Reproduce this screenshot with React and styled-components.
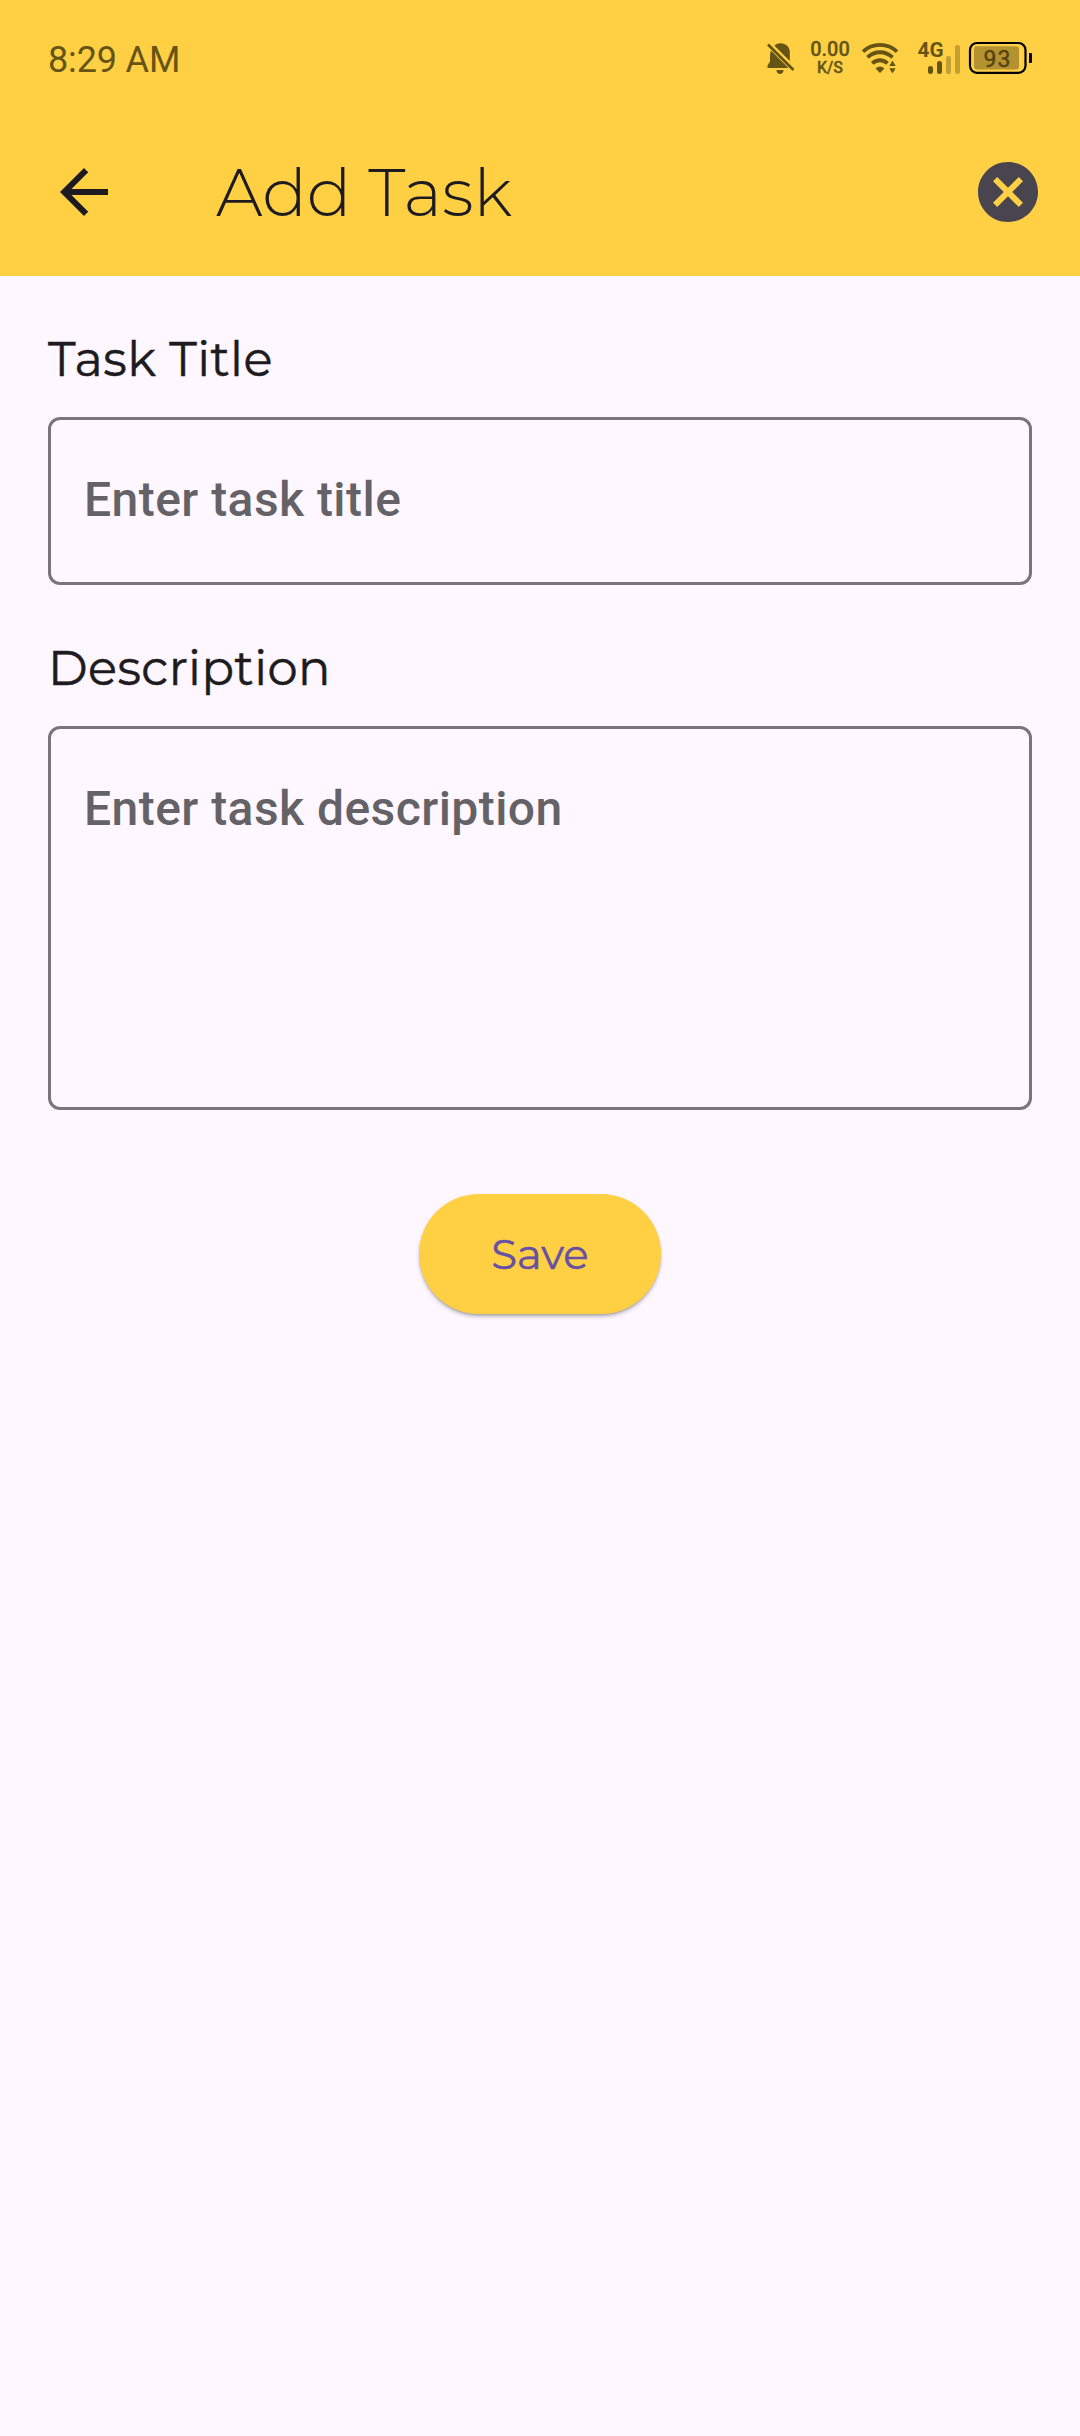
import React from "react";
import styled, { createGlobalStyle } from "styled-components";

const GlobalStyle = createGlobalStyle`
  *, *::before, *::after { box-sizing: border-box; }
  body { margin: 0; background: #fef7ff; }
`;

const display = `"Montserrat", "Inter", sans-serif`;
const body = `"Roboto", sans-serif`;

const Screen = styled.div`
  display: flex;
  flex-direction: column;
  width: 1080px;
  height: 2436px;
  background: #fef7ff;
  color: #1d1b20;
  font-family: ${body};
  overflow: hidden;
`;

const Header = styled.header`
  height: 276px;
  background: #ffd044;
`;

const StatusBar = styled.div`
  display: flex;
  align-items: center;
  justify-content: space-between;
  height: 108px;
  padding: 10px 48px 0;
  color: #665414;
`;

const Clock = styled.span`
  padding-top: 2px;
  font-size: 36px;
  line-height: 42px;
  letter-spacing: -0.15px;
`;

const StatusIcons = styled.div`
  display: flex;
  align-items: center;
  height: 42px;
`;

const NetSpeed = styled.div`
  display: flex;
  flex-direction: column;
  align-items: center;
  width: 40px;
  margin: 0 11px 0 15px;
  padding-bottom: 2px;
  font-weight: 500;
  -webkit-text-stroke: 0.3px currentColor;
`;

const SpeedValue = styled.span`
  font-size: 20px;
  line-height: 19px;
`;

const SpeedUnit = styled.span`
  font-size: 16px;
  line-height: 18px;
`;

const Toolbar = styled.div`
  display: flex;
  align-items: center;
  height: 168px;
  padding: 0 36px 0 48px;
`;

const IconButton = styled.button`
  display: flex;
  padding: 0;
  border: 0;
  background: none;
  color: ${(p) => p.$color};
`;

const Title = styled.h1`
  flex: 1;
  margin: 0 0 0 96px;
  padding-top: 2px;
  font: 300 66px/80px ${display};
`;

const Label = styled.label`
  height: 72px;
  margin-bottom: 21px;
  font: 400 48px/70px ${display};
  letter-spacing: 0.42px;
  -webkit-text-stroke: 0.5px currentColor;
`;

const Form = styled.main`
  display: flex;
  flex-direction: column;
  padding: 48px 48px 0;
`;

const field = `
  display: block;
  width: 100%;
  border: 3px solid #79747e;
  border-radius: 12px;
  background: transparent;
  font: 500 48px/72px ${body};
  letter-spacing: 0.45px;
  outline: none;
  resize: none;
  &::placeholder { color: #656267; opacity: 1; }
`;

const Input = styled.input`
  ${field}
  height: 168px;
  margin-bottom: 48px;
  padding: 0 33px 3px;
`;

const TextArea = styled.textarea`
  ${field}
  height: 384px;
  padding: 44px 33px;
`;

const SaveButton = styled.button`
  align-self: center;
  width: 242px;
  height: 120px;
  margin-top: 84px;
  padding: 0;
  border: 0;
  border-radius: 60px;
  background: #ffd044;
  box-shadow: 0 3px 4px -1px rgba(0, 0, 0, 0.34), 0 1px 2px rgba(0, 0, 0, 0.08);
  color: #6750a4;
  font: 400 42px/60px ${display};
  letter-spacing: -0.1px;
  -webkit-text-stroke: 0.5px currentColor;
`;

const StatusGlyphs = styled.svg`
  display: block;
  flex: none;
`;

function BellOff() {
  return (
    <StatusGlyphs width="29" height="42" viewBox="766 38 29 42" fill="currentColor">
      <path d="M774.500 45.700C776 44 778 43.300 780.500 43.300C786 43.300 789.800 47 789.800 52.500V61Z" />
      <path d="M771 50.500C769.800 53 770 57 770 61.500L767.500 65.500V68H788.500Z" />
      <path d="M768 44.500L793.500 70" stroke="currentColor" strokeWidth="2.700" />
      <path d="M776.500 70H783.500C783.500 72.500 782 74 780 74S776.500 72.500 776.500 70Z" />
    </StatusGlyphs>
  );
}

function Wifi() {
  return (
    <StatusGlyphs width="38" height="42" viewBox="861 38 38 42" fill="none" stroke="currentColor" strokeWidth="3.800">
      <path d="M863 51.600A25 25 0 0 1 897 51.600" />
      <path d="M867.500 57.300A18 18 0 0 1 892.500 57.300" />
      <path d="M872.300 63.300A11 11 0 0 1 887.500 63.300" />
      <path d="M875.500 68.500Q880 64.500 884.500 68.500L880 73Z" fill="currentColor" stroke="none" />
      <path d="M889.300 66L892.500 60.500L895.700 66ZM889.300 68.300H895.700L892.500 73.500Z" fill="currentColor" stroke="none" />
    </StatusGlyphs>
  );
}

const Cell = styled.div`
  display: flex;
  margin-left: 18px;
`;

function Signal() {
  return (
    <StatusGlyphs width="45" height="42" viewBox="917 38 45 42" fill="currentColor">
      <text x="917.500" y="57" fontFamily="Roboto, sans-serif" fontWeight="700" fontSize="20" textLength="26" lengthAdjust="spacingAndGlyphs">4G</text>
      <rect x="928" y="66" width="5" height="8" rx="2.300" />
      <rect x="937" y="61" width="5" height="13" rx="2.300" />
      <rect x="946" y="56" width="5" height="18" rx="2.300" opacity=".4" />
      <rect x="955" y="45" width="5" height="29" rx="2.300" opacity=".4" />
    </StatusGlyphs>
  );
}

function Battery() {
  return (
    <StatusGlyphs width="70" height="42" viewBox="962 38 70 42">
      <rect x="970" y="43" width="55.500" height="29.800" rx="7" fill="none" stroke="#000" strokeWidth="2.200" />
      <rect x="974" y="46.300" width="45" height="23.200" rx="3" fill="#b3922f" />
      <path d="M1029 53H1031Q1032 53 1032 54V62Q1032 63 1031 63H1029Z" fill="#000" />
      <text x="997.500" y="66.500" textAnchor="middle" fontFamily="Roboto, sans-serif" fontSize="23" fontWeight="400" letterSpacing="1" fill="#524310" stroke="#524310" strokeWidth=".4">93</text>
    </StatusGlyphs>
  );
}

function BackIcon() {
  return (
    <svg width="72" height="72" viewBox="0 0 24 24" fill="currentColor">
      <path d="M20 11H7.830l5.590-5.590L12 4l-8 8 8 8 1.410-1.410L7.830 13H20v-2z" />
    </svg>
  );
}

function CancelIcon() {
  return (
    <svg width="72" height="72" viewBox="0 0 24 24" fill="currentColor">
      <path d="M12 2C6.470 2 2 6.470 2 12s4.470 10 10 10 10-4.470 10-10S17.530 2 12 2zm5 13.590L15.590 17 12 13.410 8.410 17 7 15.590 10.590 12 7 8.410 8.410 7 12 10.590 15.590 7 17 8.410 13.410 12 17 15.590z" />
    </svg>
  );
}

export default function App() {
  return (
    <Screen>
      <GlobalStyle />
      <Header>
        <StatusBar>
          <Clock>8:29 AM</Clock>
          <StatusIcons>
            <BellOff />
            <NetSpeed>
              <SpeedValue>0.00</SpeedValue>
              <SpeedUnit>K/S</SpeedUnit>
            </NetSpeed>
            <Wifi />
            <Cell>
              <Signal />
              <Battery />
            </Cell>
          </StatusIcons>
        </StatusBar>
        <Toolbar>
          <IconButton $color="#1d1b20" aria-label="Back"><BackIcon /></IconButton>
          <Title>Add Task</Title>
          <IconButton $color="#49454f" aria-label="Clear"><CancelIcon /></IconButton>
        </Toolbar>
      </Header>
      <Form>
        <Label htmlFor="title">Task Title</Label>
        <Input id="title" placeholder="Enter task title" />
        <Label htmlFor="description">Description</Label>
        <TextArea id="description" placeholder="Enter task description" />
        <SaveButton>Save</SaveButton>
      </Form>
    </Screen>
  );
}
